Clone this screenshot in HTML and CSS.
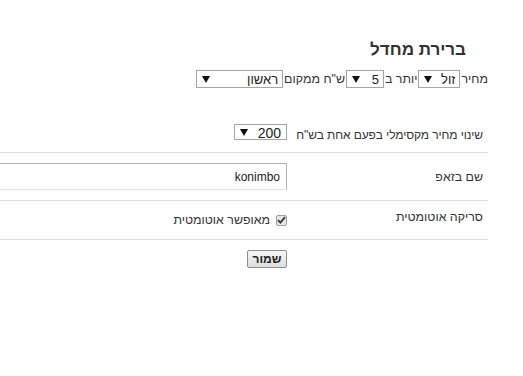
FILE: index.html
```html
<!DOCTYPE html>
<html dir="rtl" lang="he">
<head>
<meta charset="utf-8">
<link rel="stylesheet" href="styles.css">
</head>
<body>
<div class="page">
  <h2 class="title">ברירת מחדל</h2>
  <div class="price-line">
    <span>מחיר</span>
    <span class="sel sel-cheap"><select><option>זול</option></select></span>
    <span>יותר ב</span>
    <span class="sel sel-num"><select><option>5</option></select></span>
    <span>ש"ח ממקום</span>
    <span class="sel sel-place"><select><option>ראשון</option></select></span>
  </div>
  <table class="form">
    <colgroup><col class="col-label"><col class="col-field"></colgroup>
    <tr class="row row-max">
      <td class="label">שינוי מחיר מקסימלי בפעם אחת בש"ח</td>
      <td class="field"><span class="sel sel-max"><select><option>200</option></select></span></td>
    </tr>
    <tr class="row row-name">
      <td class="label">שם בזאפ</td>
      <td class="field"><input class="text" type="text" value="konimbo" dir="ltr"></td>
    </tr>
    <tr class="row row-auto">
      <td class="label">סריקה אוטומטית</td>
      <td class="field">
        <label class="check">
          <span class="box"><svg width="9" height="8" viewBox="0 0 9 8"><path d="M1 4.2 L3.4 6.6 L8 1.2" fill="none" stroke="#3a3a3a" stroke-width="1.9"/></svg></span>
          <span>מאופשר אוטומטית</span>
        </label>
      </td>
    </tr>
    <tr class="row row-save">
      <td class="label"></td>
      <td class="field"><button class="btn">שמור</button></td>
    </tr>
  </table>
</div>
</body>
</html>
```

FILE: styles.css
```css
html, body {
  margin: 0;
  padding: 0;
  overflow: hidden;
  background: #fff;
}
body {
  font-family: "Liberation Sans", Arial, sans-serif;
  font-size: 12.4px;
  color: #333;
}
.page {
  margin-right: 35px;
  padding-top: 38px;
}
.title {
  margin: 0 22px 0 0;
  font-size: 17px;
  font-weight: bold;
  line-height: 24px;
  color: #333;
}
.price-line {
  display: flex;
  align-items: center;
  gap: 1px;
  margin-top: 8px;
  white-space: nowrap;
}
.sel {
  position: relative;
  display: inline-block;
  height: 18px;
}
.sel select {
  -webkit-appearance: none;
  appearance: none;
  height: 18px;
  border: 1px solid #a6a6a6;
  border-radius: 0;
  background: #fff;
  font-family: "Liberation Sans", Arial, sans-serif;
  font-size: 13px;
  color: #222;
  padding: 0 4px 0 18px;
  margin: 0;
  box-sizing: border-box;
  direction: rtl;
  display: block;
}
.sel::after {
  content: "";
  position: absolute;
  left: 6px;
  top: 6px;
  border-left: 4px solid transparent;
  border-right: 4px solid transparent;
  border-top: 7px solid #111;
  pointer-events: none;
}
.sel-cheap select { width: 42px; }
.sel-num select { width: 38px; }
.sel-place select { width: 87px; }
.sel-max select { width: 53px; height: 16px; font-size: 14px; padding-right: 5px; }
.sel-max { height: 16px; }
.sel-max::after { top: 5px; }

.form {
  border-collapse: collapse;
  table-layout: fixed;
  width: 700px;
  margin-top: 10px;
}
.col-label { width: 188px; }
.row td {
  border-bottom: 1px solid #dcdcdc;
}
.row-save td { border-bottom: none; }
.label {
  padding: 0 5px 0 0;
  text-align: right;
  white-space: nowrap;
  overflow: visible;
}
.row-max .label { font-size: 12px; letter-spacing: -0.1px; }
.field {
  padding: 0 13px 0 0;
  text-align: right;
}
.row-max td { padding-top: 25px; padding-bottom: 10px; }
.row-max .label { padding-top: 30px; }
.row-name td { padding-top: 10px; padding-bottom: 10px; }
.row-auto td { padding-top: 9px; padding-bottom: 12px; vertical-align: top; }
.row-save td { padding-top: 10px; vertical-align: top; line-height: 0; }

.text {
  width: 400px;
  height: 27px;
  box-sizing: border-box;
  border: 1px solid #b3b3b3;
  border-bottom-color: #e2e2e2;
  padding: 0 6px;
  font-family: "Liberation Sans", Arial, sans-serif;
  font-size: 12px;
  color: #222;
  text-align: right;
  display: block;
}
.check {
  display: inline-flex;
  align-items: center;
  gap: 6px;
  padding-top: 3px;
}
.box {
  width: 11px;
  height: 11px;
  box-sizing: border-box;
  border: 1px solid #a0a0a0;
  border-radius: 2px;
  background: #e6e6e6;
  display: flex;
  align-items: center;
  justify-content: center;
}
.btn {
  height: 18px;
  width: 40px;
  border: 1px solid #8e8e8e;
  border-radius: 2px;
  background: linear-gradient(#f6f6f6, #dedede);
  font-family: "Liberation Sans", Arial, sans-serif;
  font-size: 12px;
  font-weight: bold;
  line-height: 16px;
  color: #222;
  padding: 0;
  vertical-align: top;
}
```
